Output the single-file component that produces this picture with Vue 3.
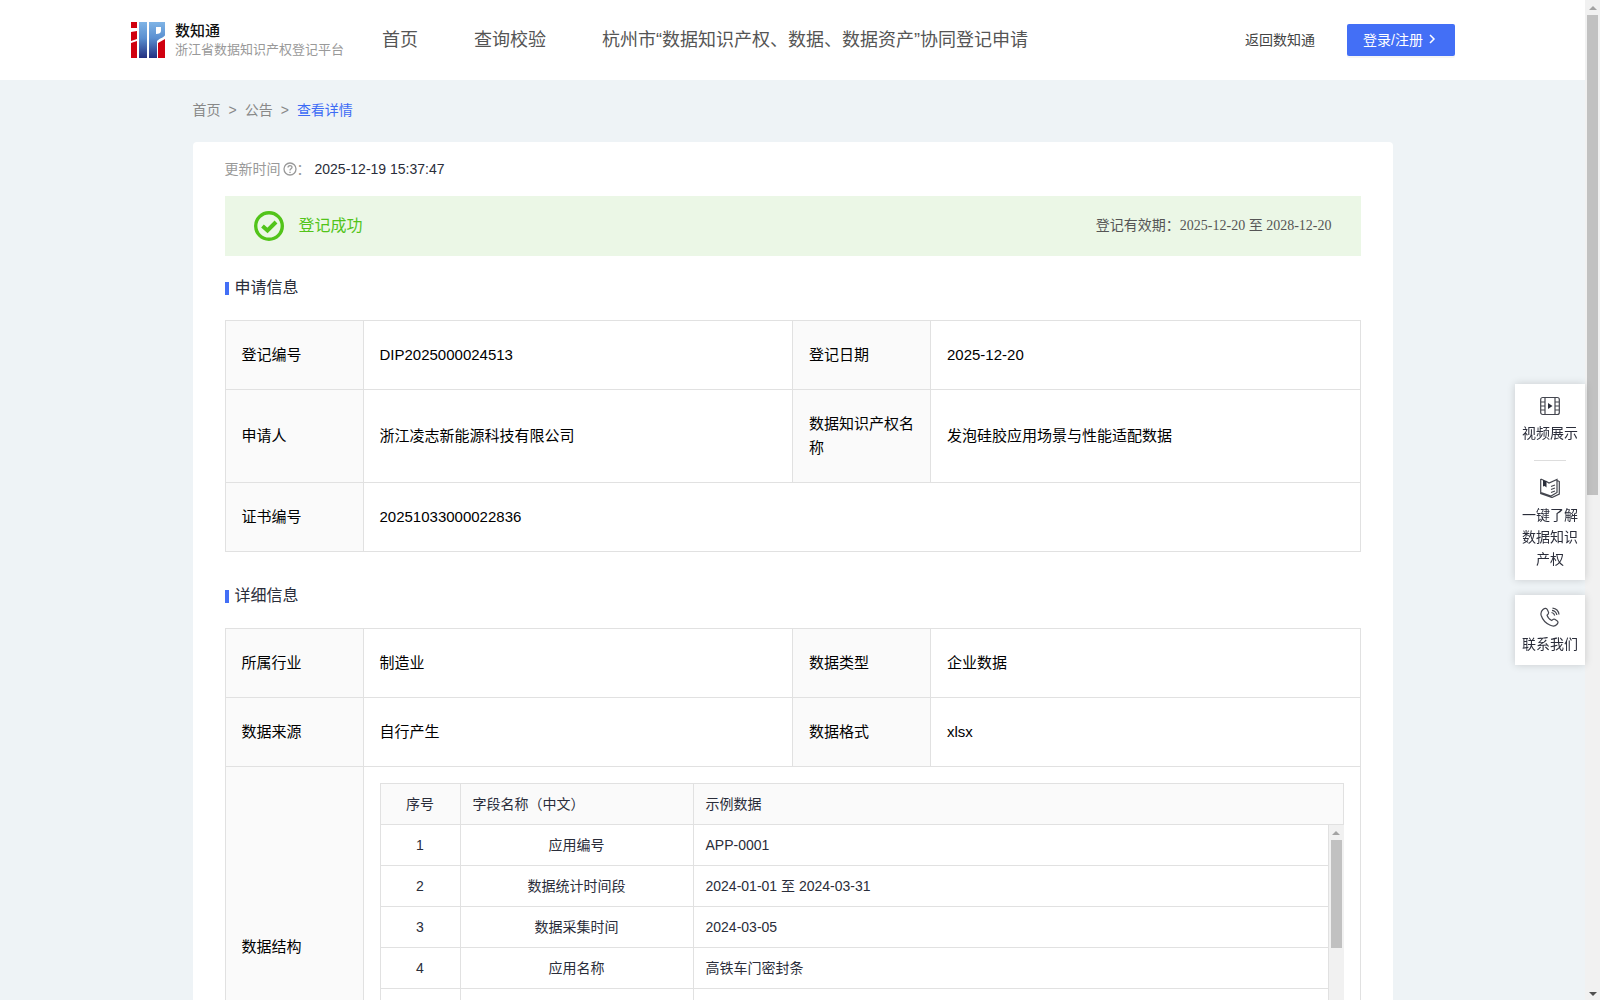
<template>
  <div class="shell">
    <div class="page">
      <header class="header">
        <a class="logo" href="#">
          <svg class="logo-mark" viewBox="0 0 34 36" aria-hidden="true">
            <defs>
              <linearGradient id="logoBlue" x1="0" y1="0" x2="0" y2="1">
                <stop offset="0" stop-color="#7fb4e6" />
                <stop offset="0.45" stop-color="#5a8fd0" />
                <stop offset="1" stop-color="#232f80" />
              </linearGradient>
            </defs>
            <path fill="#d0000f" d="M0 0h6v6H0zM0 10l6-1v8l-6 2zM0 21l6-2v17H0zM27 21l7-4v19h-7z" />
            <path fill="url(#logoBlue)" d="M8 0h8v36H8z" />
            <path fill="url(#logoBlue)" fill-rule="evenodd" d="M18 0h16v13c0 2-5 3-8 6v17h-8zM25 5v7c3 0 5-1 5-3V5z" />
          </svg>
          <span class="logo-text">
            <strong>数知通</strong>
            <small>浙江省数据知识产权登记平台</small>
          </span>
        </a>
        <nav class="nav">
          <a v-for="item in navItems" :key="item" href="#">{{ item }}</a>
        </nav>
        <a class="back" href="#">返回数知通</a>
        <button class="login" type="button">
          登录/注册
          <svg viewBox="0 0 12 12" aria-hidden="true">
            <path d="M3 2l4 4-4 4" />
          </svg>
        </button>
      </header>

      <main class="content">
        <nav class="crumbs">
          <a href="#">首页</a>
          <span>&gt;</span>
          <a href="#">公告</a>
          <span>&gt;</span>
          <a class="current" href="#">查看详情</a>
        </nav>

        <section class="card">
          <div class="update">
            <span class="update-label">更新时间</span>
            <svg viewBox="0 0 14 14" aria-hidden="true">
              <circle cx="7" cy="7" r="6" />
              <path d="M5 5.600c0-2.700 4-2.700 4-.3 0 1.500-2 1.500-2 3.200M7 9.700v1.200" />
            </svg>
            <span class="update-colon">：</span>
            <time>2025-12-19 15:37:47</time>
          </div>

          <div class="banner">
            <svg viewBox="0 0 30 30" aria-hidden="true">
              <circle cx="15" cy="15" r="13.300" />
              <path class="check" d="M8.500 15l5 4.500 8.500-8.500" />
            </svg>
            <span class="banner-status">登记成功</span>
            <span class="banner-date">登记有效期：2025-12-20 至 2028-12-20</span>
          </div>

          <h2 class="title">申请信息</h2>
          <table class="info">
            <colgroup>
              <col class="col-label" />
              <col />
              <col class="col-label" />
              <col />
            </colgroup>
            <tbody>
              <tr>
                <th>登记编号</th>
                <td>DIP2025000024513</td>
                <th>登记日期</th>
                <td>2025-12-20</td>
              </tr>
              <tr>
                <th>申请人</th>
                <td>浙江凌志新能源科技有限公司</td>
                <th>数据知识产权名称</th>
                <td>发泡硅胶应用场景与性能适配数据</td>
              </tr>
              <tr>
                <th>证书编号</th>
                <td colspan="3">20251033000022836</td>
              </tr>
            </tbody>
          </table>

          <h2 class="title title-next">详细信息</h2>
          <table class="info">
            <colgroup>
              <col class="col-label" />
              <col />
              <col class="col-label" />
              <col />
            </colgroup>
            <tbody>
              <tr>
                <th>所属行业</th>
                <td>制造业</td>
                <th>数据类型</th>
                <td>企业数据</td>
              </tr>
              <tr>
                <th>数据来源</th>
                <td>自行产生</td>
                <th>数据格式</th>
                <td>xlsx</td>
              </tr>
              <tr>
                <th>数据结构</th>
                <td class="cell-fields" colspan="3">
                  <table class="fields fields-head">
                    <colgroup>
                      <col class="col-index" />
                      <col class="col-name" />
                      <col />
                    </colgroup>
                    <thead>
                      <tr>
                        <th class="center">序号</th>
                        <th>字段名称（中文）</th>
                        <th>示例数据</th>
                      </tr>
                    </thead>
                  </table>
                  <div class="fields-body">
                    <div class="fields-scroll">
                      <table class="fields">
                        <colgroup>
                          <col class="col-index" />
                          <col class="col-name" />
                          <col />
                        </colgroup>
                        <tbody>
                          <tr v-for="(row, i) in fields" :key="i">
                            <td class="center">{{ row.no }}</td>
                            <td class="center">{{ row.name }}</td>
                            <td>{{ row.sample }}</td>
                          </tr>
                        </tbody>
                      </table>
                    </div>
                    <div class="bar">
                      <i class="arrow arrow-up"></i>
                      <i class="thumb thumb-fields"></i>
                    </div>
                  </div>
                </td>
              </tr>
            </tbody>
          </table>
        </section>
      </main>
    </div>

    <div class="bar">
      <i class="arrow arrow-up"></i>
      <i class="thumb thumb-page"></i>
      <i class="arrow arrow-down"></i>
    </div>

    <aside class="side">
      <div class="side-box">
        <a class="side-item" href="#">
          <svg viewBox="0 0 20 20" aria-hidden="true">
            <rect x="0.700" y="1.500" width="18.600" height="17" rx="2" />
            <path d="M5 1.500v17M15 1.500v17M1 6h4M1 10h4M1 14h4M15 6h4M15 10h4M15 14h4" />
            <path class="solid" d="M8 7v6l4.500-3z" />
          </svg>
          视频展示
        </a>
        <hr />
        <a class="side-item" href="#">
          <svg viewBox="0 0 20 20" aria-hidden="true">
            <path d="M.7 1v14.500l11.300 4 7.300-3.500V3.500l-2-1M.7 1l2.300 1M6 3.200L9 5l8-3.500v13L11 18 1 14.500" />
            <path d="M11 8.500l4-1.500M11 11.500l4-1.500M11 14.500l4-1.500" />
            <path class="solid" d="M3 1.500l3.500 1.500v6.500L4.700 8 3 8.500z" />
          </svg>
          一键了解数据知识产权
        </a>
      </div>
      <div class="side-box">
        <a class="side-item" href="#">
          <svg viewBox="0 0 20 20" aria-hidden="true">
            <path d="M3 2.500C5 .8 6.500 1 7.500 3l1 2.200c.5 1.300-.2 2-1.500 3 .6 2.300 2.300 4.200 4.800 5.300 1-1.300 2-1.800 3-1.200l2.200 1.400c1.500 1 1.200 2.300-.2 3.800-1.500 1.700-4 2-7 .5C5.500 16 2.500 12.500 1.200 8.500.5 6 1.200 4 3 2.500z" />
            <path d="M11.500 5.500c1.700.3 2.800 1.400 3.200 3M12 3.300c2.700.4 4.400 2.200 4.900 4.700M12.500 1.200c3.500.4 6 2.800 6.500 6.300" />
          </svg>
          联系我们
        </a>
      </div>
    </aside>
  </div>
</template>

<script setup>
const navItems = [
  "首页",
  "查询校验",
  "杭州市“数据知识产权、数据、数据资产”协同登记申请"
];

const fields = [
  { no: 1, name: "应用编号", sample: "APP-0001" },
  { no: 2, name: "数据统计时间段", sample: "2024-01-01 至 2024-03-31" },
  { no: 3, name: "数据采集时间", sample: "2024-03-05" },
  { no: 4, name: "应用名称", sample: "高铁车门密封条" },
  { no: "", name: "", sample: "" }
];
</script>

<style>
body {
  margin: 0;
}
</style>

<style scoped>
.shell {
  display: flex;
  height: 100vh;
  overflow: hidden;
  font-family: "Liberation Sans", "Noto Sans CJK SC", sans-serif;
  font-size: 14px;
  line-height: 22px;
  color: #2a2d3a;
  background: #eef3f6;
}

.shell * {
  box-sizing: border-box;
}

a {
  color: inherit;
  text-decoration: none;
}

.page {
  flex: 1;
  min-width: 0;
  overflow-y: auto;
  scrollbar-width: none;
}

/* header */
.header {
  display: flex;
  align-items: center;
  height: 80px;
  padding: 0 130px;
  background: #fff;
  white-space: nowrap;
}

.logo {
  display: flex;
  align-items: center;
  gap: 10px;
  width: 252px;
  padding-left: 1px;
}

.logo-mark {
  width: 34px;
  height: 36px;
}

.logo-text {
  display: flex;
  flex-direction: column;
}

.logo-text strong {
  font-size: 15px;
  line-height: 20px;
  font-weight: 500;
  color: #111;
}

.logo-text small {
  font-size: 13px;
  line-height: 18px;
  color: #999;
}

.nav {
  display: flex;
  flex: 1;
  gap: 56px;
  font-size: 18px;
  line-height: 26px;
  color: #555;
}

.back {
  margin-right: 32px;
  color: #444;
}

.login {
  display: flex;
  align-items: center;
  gap: 4px;
  height: 32px;
  padding: 0 16px 2px;
  border: 0;
  border-radius: 2px;
  font-family: inherit;
  font-size: 14px;
  color: #fff;
  background: #436ff6;
  box-shadow: 0 2px 0 rgba(0, 0, 0, 0.04);
  cursor: pointer;
}

.login svg {
  width: 12px;
  height: 12px;
  fill: none;
  stroke: #fff;
  stroke-width: 1.5;
}

/* content */
.content {
  max-width: 1200px;
  margin: 0 auto;
}

.crumbs {
  display: flex;
  gap: 8px;
  padding: 19px 0 21px;
  color: #888;
}

.crumbs .current {
  color: #3d6bf5;
}

.card {
  padding: 16px 32px 32px;
  border-radius: 4px;
  background: #fff;
}

.update {
  display: flex;
  align-items: center;
  color: #999;
}

.update svg {
  width: 14px;
  height: 14px;
  margin-left: 2px;
  fill: none;
  stroke: #999;
  stroke-width: 1.3;
}

.update time {
  margin-left: 4px;
  color: #2a2d3a;
}

.banner {
  display: flex;
  align-items: center;
  height: 60px;
  margin: 16px 0 20px;
  padding: 0 29px;
  background: #ebf7e6;
}

.banner svg {
  width: 30px;
  height: 30px;
  margin-right: 15px;
  fill: none;
  stroke: #52c41a;
  stroke-width: 3.4;
}

.banner .check {
  stroke-width: 4;
}

.banner-status {
  flex: 1;
  font-size: 16px;
  color: #52c41a;
}

.banner-date {
  font-family: "Liberation Serif", "Noto Sans CJK SC", serif;
  color: #555;
}

.title {
  display: flex;
  align-items: center;
  gap: 6px;
  margin: 0 0 20px;
  font-size: 16px;
  line-height: 24px;
  font-weight: 400;
}

.title::before {
  content: "";
  width: 4px;
  height: 13px;
  background: #436ff6;
}

.title-next {
  margin-top: 32px;
}

table {
  width: 100%;
  border-collapse: collapse;
  table-layout: fixed;
}

th {
  font-weight: 400;
  text-align: left;
  background: #fafafa;
}

.info > tbody > tr > th,
.info > tbody > tr > td {
  padding: 22px 16px;
  border: 1px solid #e1e1e1;
  font-size: 15px;
  line-height: 24px;
  color: #000;
}

.col-label {
  width: 138px;
}

.info > tbody > tr > .cell-fields {
  padding: 16px;
}

.fields th,
.fields td {
  height: 41px;
  padding: 0 12px;
  border: 1px solid #e1e1e1;
  font-size: 14px;
  line-height: 22px;
  color: #2a2d3a;
}

.fields .center {
  text-align: center;
}

/* the first row shares its top line with the header table */
.fields tbody tr:first-child td {
  height: 40px;
  border-top: 0;
}

.col-index {
  width: 80px;
}

.col-name {
  width: 233px;
}

.fields-body {
  display: flex;
  height: 286px;
}

.fields-scroll {
  flex: 1;
  overflow-y: auto;
  scrollbar-width: none;
}

/* scrollbars */
.bar {
  display: flex;
  flex-direction: column;
  align-items: center;
  width: 15px;
  background: #f1f1f1;
}

.arrow {
  border: 4px solid transparent;
}

.arrow-up {
  margin: 2px 0 5px;
  border-bottom-color: #a3a3a3;
}

.arrow-down {
  margin-top: auto;
  border-top-color: #505050;
}

.thumb {
  width: 11px;
  background: #c1c1c1;
}

.thumb-page {
  height: 48%;
}

.thumb-fields {
  height: 108px;
}

/* floating panel */
.side {
  position: fixed;
  top: 384px;
  right: 15px;
  display: flex;
  flex-direction: column;
  gap: 15px;
  width: 70px;
}

.side-box {
  padding: 12px 7px 10px;
  background: #fff;
  box-shadow: 0 0 8px rgba(0, 0, 0, 0.16);
}

.side-item {
  display: flex;
  flex-direction: column;
  align-items: center;
  gap: 6px;
  text-align: center;
}

.side-item svg {
  width: 20px;
  height: 20px;
  fill: none;
  stroke: #44464f;
  stroke-width: 1.2;
}

.side-item .solid {
  fill: #2a2d3a;
  stroke: none;
}

.side hr {
  width: 32px;
  margin: 16px auto 17px;
  border: 0;
  border-top: 1px solid #ddd;
}
</style>
